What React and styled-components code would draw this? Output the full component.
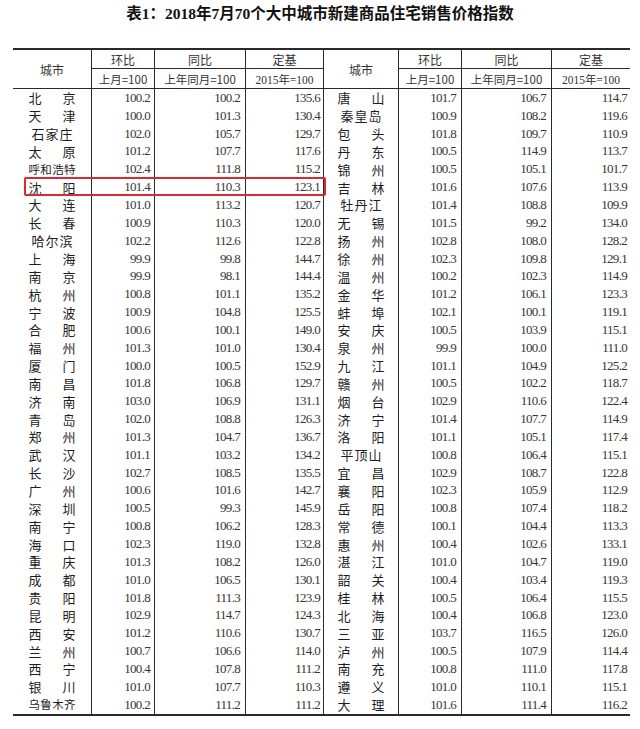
import React from "react";
import styled, { createGlobalStyle } from "styled-components";

const left = `北京 100.2 100.2 135.6
天津 100.0 101.3 130.4
石家庄 102.0 105.7 129.7
太原 101.2 107.7 117.6
呼和浩特 102.4 111.8 115.2
沈阳 101.4 110.3 123.1
大连 101.0 113.2 120.7
长春 100.9 110.3 120.0
哈尔滨 102.2 112.6 122.8
上海 99.9 99.8 144.7
南京 99.9 98.1 144.4
杭州 100.8 101.1 135.2
宁波 100.9 104.8 125.5
合肥 100.6 100.1 149.0
福州 101.3 101.0 130.4
厦门 100.0 100.5 152.9
南昌 101.8 106.8 129.7
济南 103.0 106.9 131.1
青岛 102.0 108.8 126.3
郑州 101.3 104.7 136.7
武汉 101.1 103.2 134.2
长沙 102.7 108.5 135.5
广州 100.6 101.6 142.7
深圳 100.5 99.3 145.9
南宁 100.8 106.2 128.3
海口 102.3 119.0 132.8
重庆 101.3 108.2 126.0
成都 101.0 106.5 130.1
贵阳 101.8 111.3 123.9
昆明 102.9 114.7 124.3
西安 101.2 110.6 130.7
兰州 100.7 106.6 114.0
西宁 100.4 107.8 111.2
银川 101.0 107.7 110.3
乌鲁木齐 100.2 111.2 111.2`;

const right = `唐山 101.7 106.7 114.7
秦皇岛 100.9 108.2 119.6
包头 101.8 109.7 110.9
丹东 100.5 114.9 113.7
锦州 100.5 105.1 101.7
吉林 101.6 107.6 113.9
牡丹江 101.4 108.8 109.9
无锡 101.5 99.2 134.0
扬州 102.8 108.0 128.2
徐州 102.3 109.8 129.1
温州 100.2 102.3 114.9
金华 101.2 106.1 123.3
蚌埠 102.1 100.1 119.1
安庆 100.5 103.9 115.1
泉州 99.9 100.0 111.0
九江 101.1 104.9 125.2
赣州 100.5 102.2 118.7
烟台 102.9 110.6 122.4
济宁 101.4 107.7 114.9
洛阳 101.1 105.1 117.4
平顶山 100.8 106.4 115.1
宜昌 102.9 108.7 122.8
襄阳 102.3 105.9 112.9
岳阳 100.8 107.4 118.2
常德 100.1 104.4 113.3
惠州 100.4 102.6 133.1
湛江 101.0 104.7 119.0
韶关 100.4 103.4 119.3
桂林 100.5 106.4 115.5
北海 100.4 106.8 123.0
三亚 103.7 116.5 126.0
泸州 100.5 107.9 114.4
南充 100.8 111.0 117.8
遵义 101.0 110.1 115.1
大理 101.6 111.4 116.2`;

const parse = (txt) => txt.split("\n").map((l) => l.trim().split(" "));
const leftRows = parse(left);
const rightRows = parse(right);

const COLS = "79px 63px 91px 78px 75px 63px 90px 78px";
const LINE = "#2a2a2a";
const SERIF = `"Liberation Serif", "Noto Sans CJK SC", serif`;
const CJK = `"Noto Sans CJK SC", "Liberation Sans", sans-serif`;

const GlobalStyle = createGlobalStyle`
  html, body {
    margin: 0;
    padding: 0;
    background: #fff;
  }
`;

const Page = styled.div`
  width: 640px;
  height: 729px;
  padding: 4px 10px 0 13px;
  box-sizing: border-box;
  background: #fff;
`;

const Title = styled.h1`
  margin: 0 0 24px -13px;
  width: 640px;
  height: 20px;
  line-height: 20px;
  text-align: center;
  font-family: ${SERIF};
  font-size: 15.5px;
  font-weight: 700;
  color: #111;
`;

const TableWrap = styled.div`
  position: relative;
  width: 617px;
  border-top: 2px solid ${LINE};
  border-bottom: 2px solid ${LINE};
`;

const HeadGrid = styled.div`
  display: grid;
  grid-template-columns: ${COLS};
  grid-template-rows: 19px 20px;
`;

const HeadCell = styled.div`
  box-sizing: border-box;
  display: flex;
  align-items: center;
  justify-content: center;
  border-right: ${(p) => (p.$last ? "none" : `1px solid ${LINE}`)};
  border-bottom: 1px solid ${LINE};
  grid-column: ${(p) => (p.$col ? `${p.$col}` : "auto")};
  grid-row: ${(p) => (p.$col ? "1 / span 2" : "auto")};
  font-family: ${(p) => (p.$serif ? SERIF : CJK)};
  font-size: ${(p) => (p.$small ? "11.5px" : "12px")};
  color: #333;
  white-space: nowrap;
`;

const Row = styled.div`
  display: grid;
  grid-template-columns: ${COLS};
  height: 17.857px;
`;

const CityCell = styled.div`
  box-sizing: border-box;
  display: flex;
  align-items: center;
  justify-content: center;
  border-right: 1px solid ${LINE};
`;

const NameBox = styled.div`
  box-sizing: border-box;
  width: 47px;
  display: flex;
  justify-content: space-between;
  padding: 0 ${(p) => (p.$len === 3 ? "3px" : "0")};
  font-family: ${CJK};
  font-size: ${(p) => (p.$len >= 4 ? "11.5px" : "13px")};
  line-height: 17px;
  color: #1e1e1e;
`;

const NumCell = styled.div`
  box-sizing: border-box;
  display: flex;
  align-items: center;
  justify-content: flex-end;
  padding-right: ${(p) => p.$pad}px;
  border-right: ${(p) => (p.$last ? "none" : `1px solid ${LINE}`)};
  font-family: ${SERIF};
  font-size: 13px;
  letter-spacing: -0.7px;
  color: #363636;
`;

const Highlight = styled.div`
  position: absolute;
  left: 11px;
  top: 127px;
  width: 302px;
  height: 18.5px;
  box-sizing: border-box;
  border: 2px solid #cc2f36;
  border-radius: 2px;
  box-shadow: 0 0 1px rgba(204, 47, 54, 0.5);
  pointer-events: none;
`;

const Name = ({ text }) => {
  const chars = [...text];
  return (
    <NameBox $len={chars.length}>
      {chars.map((c, i) => (
        <span key={i}>{c}</span>
      ))}
    </NameBox>
  );
};

const Header = () => (
  <HeadGrid>
    <HeadCell $col={1}>城市</HeadCell>
    <HeadCell>环比</HeadCell>
    <HeadCell>同比</HeadCell>
    <HeadCell>定基</HeadCell>
    <HeadCell $col={5}>城市</HeadCell>
    <HeadCell>环比</HeadCell>
    <HeadCell>同比</HeadCell>
    <HeadCell $last>定基</HeadCell>
    <HeadCell $small>上月=100</HeadCell>
    <HeadCell $small>上年同月=100</HeadCell>
    <HeadCell $small $serif>2015年=100</HeadCell>
    <HeadCell $small>上月=100</HeadCell>
    <HeadCell $small>上年同月=100</HeadCell>
    <HeadCell $small $serif $last>2015年=100</HeadCell>
  </HeadGrid>
);

export default function App() {
  return (
    <>
      <GlobalStyle />
      <Page>
        <Title>表1：2018年7月70个大中城市新建商品住宅销售价格指数</Title>
        <TableWrap>
          <Header />
          {leftRows.map((l, i) => {
            const r = rightRows[i];
            return (
              <Row key={l[0]}>
                <CityCell>
                  <Name text={l[0]} />
                </CityCell>
                <NumCell $pad={4}>{l[1]}</NumCell>
                <NumCell $pad={5}>{l[2]}</NumCell>
                <NumCell $pad={3}>{l[3]}</NumCell>
                <CityCell>
                  <Name text={r[0]} />
                </CityCell>
                <NumCell $pad={5}>{r[1]}</NumCell>
                <NumCell $pad={5}>{r[2]}</NumCell>
                <NumCell $pad={3} $last>
                  {r[3]}
                </NumCell>
              </Row>
            );
          })}
          <Highlight />
        </TableWrap>
      </Page>
    </>
  );
}
